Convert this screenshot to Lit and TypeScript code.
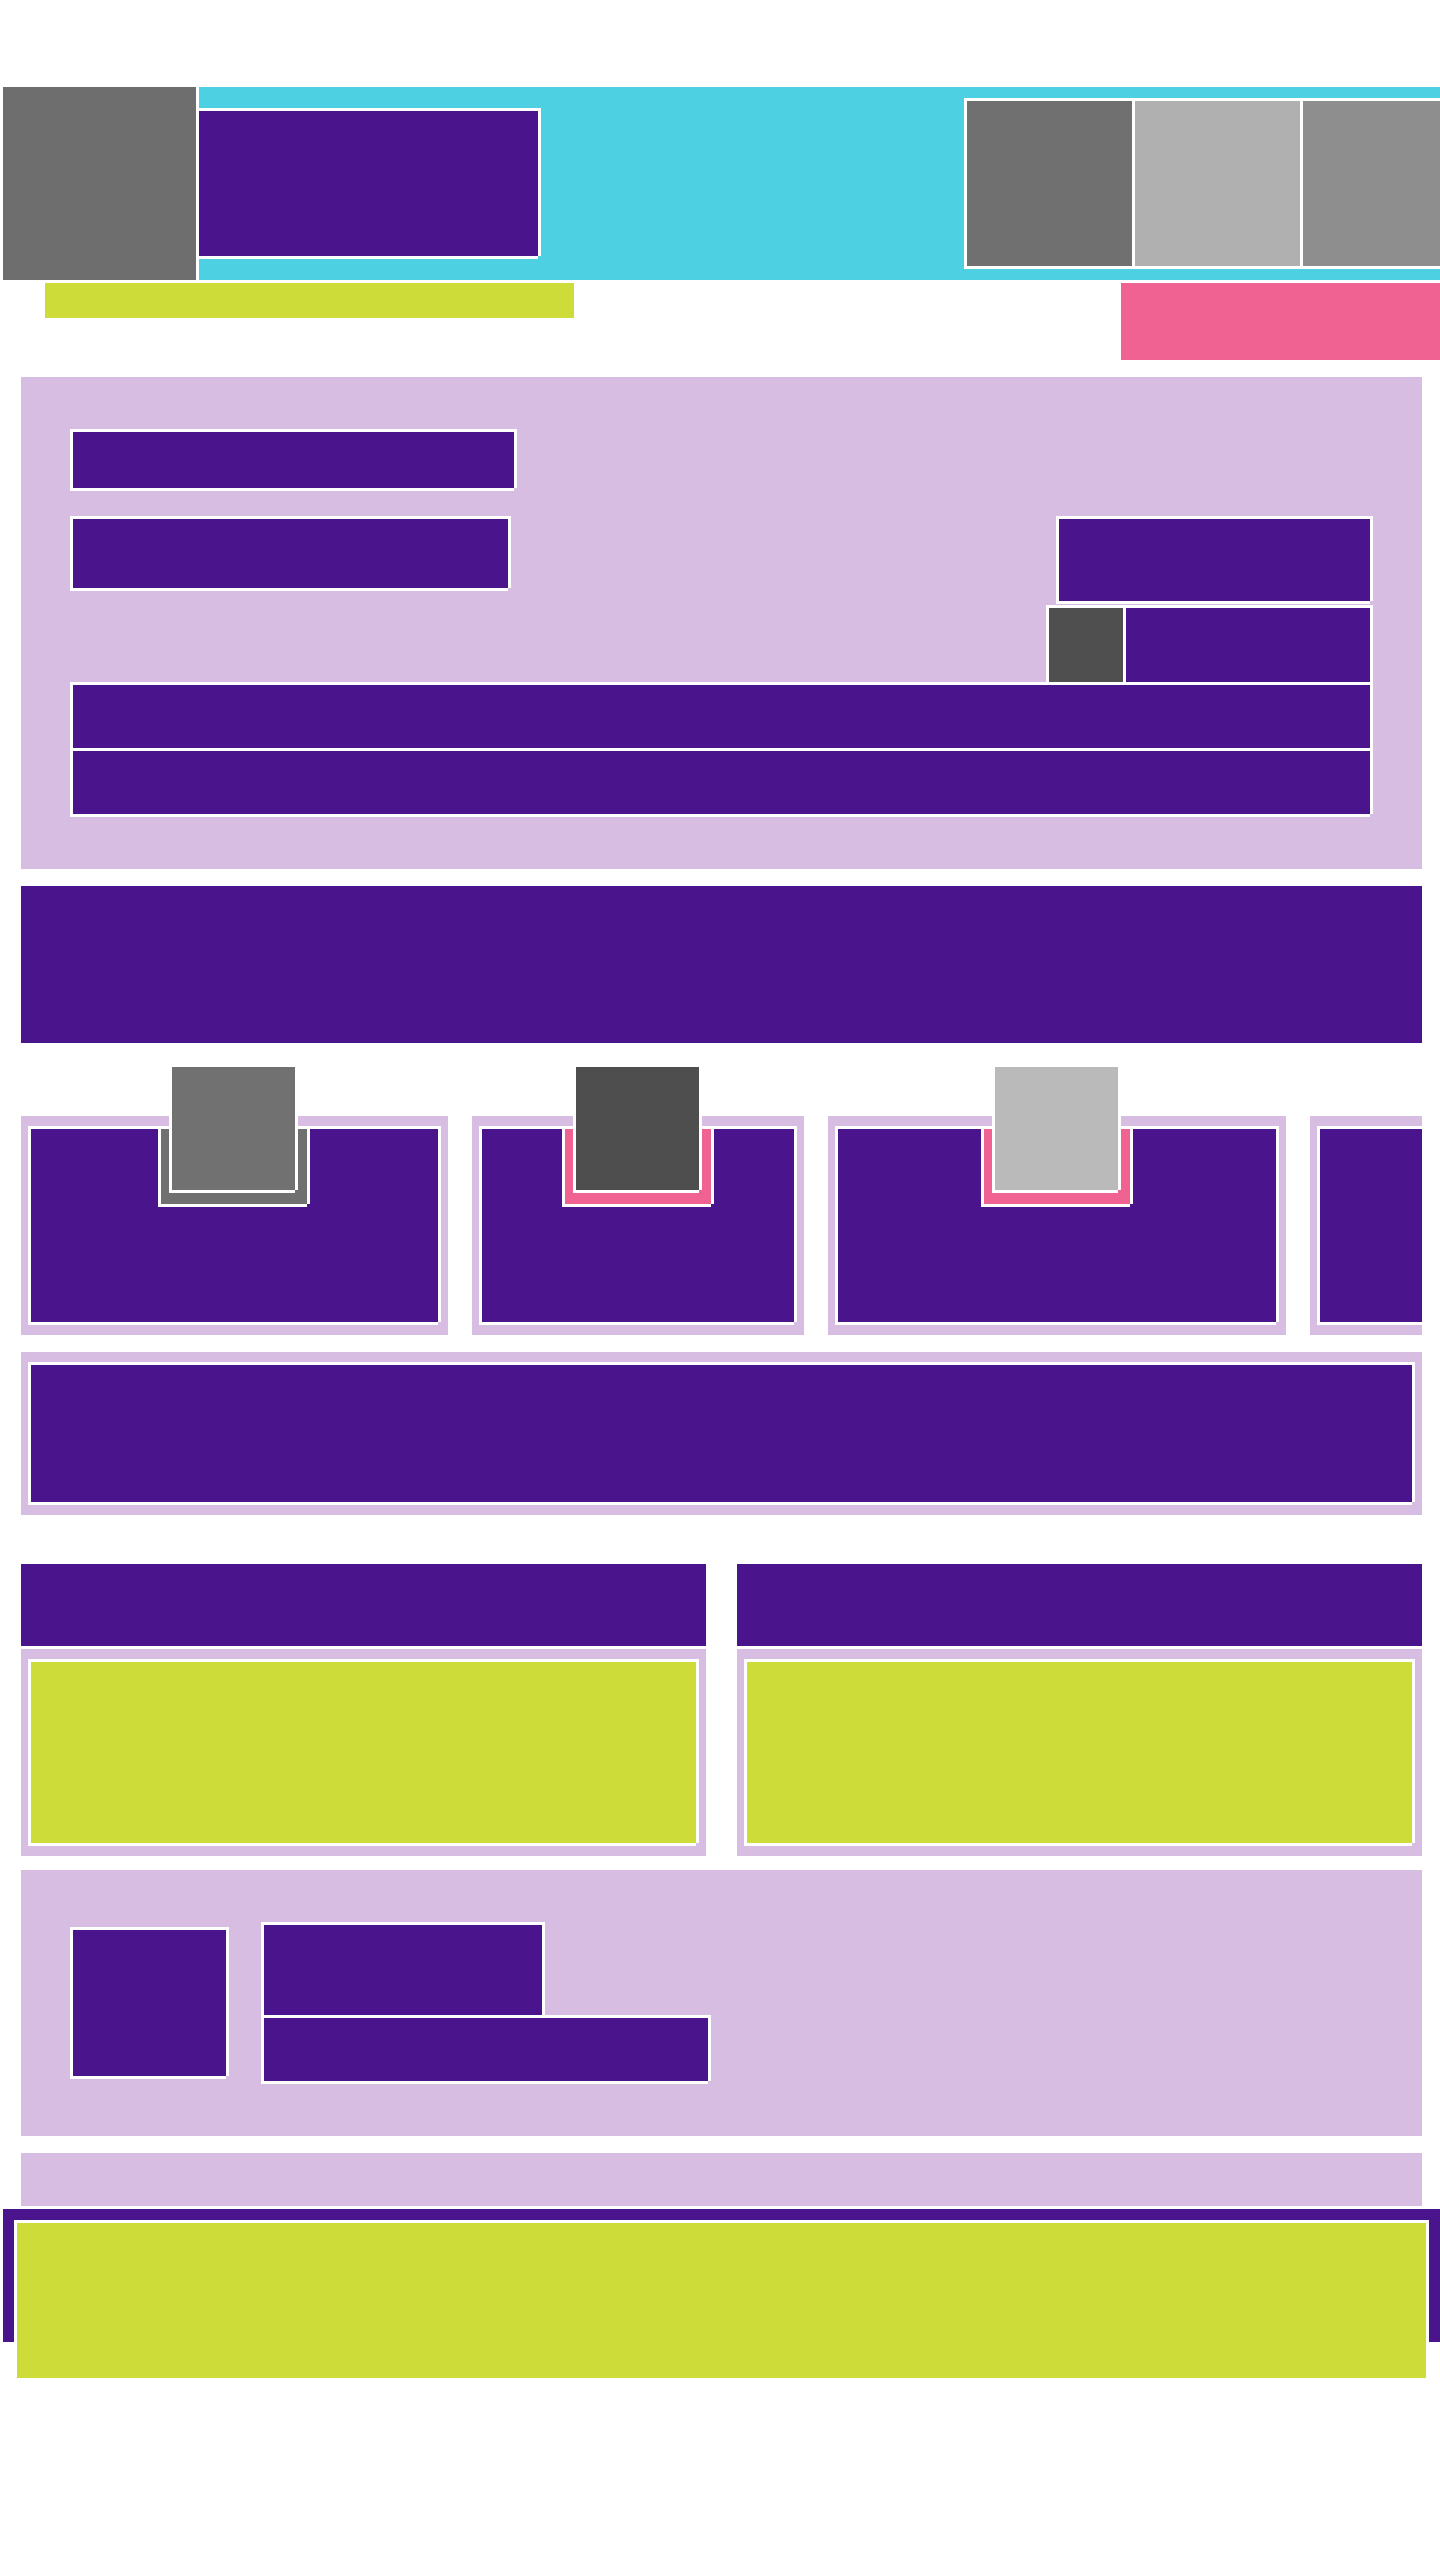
import { LitElement, html, css } from "lit";
import { customElement } from "lit/decorators.js";
import { styleMap } from "lit/directives/style-map.js";

interface Card {
  width: number;
  badge: string;
  avatar: string;
}

const CARDS: Card[] = [
  { width: 427, badge: "#707070", avatar: "#717171" },
  { width: 332, badge: "#f06292", avatar: "#4e4e4e" },
  { width: 458, badge: "#f06292", avatar: "#bababa" },
  { width: 427, badge: "#f06292", avatar: "#717171" },
];

const ACTIONS = ["#707070", "#b0b0b0", "#8e8e8e"];

@customElement("app-root")
export class AppRoot extends LitElement {
  static styles = css`
    :host {
      --purple: #4a148c;
      --lavender: #d7bde2;
      --lime: #cddc39;
      --pink: #f06292;
      --cyan: #4dd0e1;
      display: block;
      overflow-x: clip;
      background: #fff;
      padding: 87px 0 182px;
    }
    * {
      box-sizing: border-box;
    }
    /* White hairline around a block, open at its bottom right corner. */
    .block {
      background: var(--purple);
      box-shadow: -3px -3px #fff, 3px -3px #fff, -3px 3px #fff, 3px 0 #fff, 0 3px #fff;
    }
    .header {
      display: flex;
      gap: 3px;
      margin-left: 3px;
    }
    .logo {
      flex: none;
      width: 193px;
      background: #6e6e6e;
    }
    .bar {
      flex: 1;
      min-width: 0;
      display: flex;
      align-items: center;
      justify-content: space-between;
      height: 193px;
      background: var(--cyan);
    }
    .brand {
      width: 339px;
      height: 145px;
    }
    .actions {
      display: flex;
      gap: 3px;
      margin-right: -28px;
    }
    .action {
      width: 165px;
      height: 165px;
    }
    .subheader {
      display: flex;
      align-items: flex-start;
      justify-content: space-between;
      margin: 3px 0 17px 45px;
    }
    .crumbs {
      width: 529px;
      height: 35px;
      background: var(--lime);
    }
    .status {
      width: 319px;
      height: 77px;
      background: var(--pink);
    }
    .main {
      display: flex;
      flex-direction: column;
      margin: 0 18px 0 21px;
    }
    .panel {
      background: var(--lavender);
    }
    .summary {
      display: flex;
      flex-direction: column;
      gap: 3px;
      padding: 55px 52px;
    }
    .title {
      width: 441px;
      height: 56px;
      margin-bottom: 28px;
    }
    .details {
      display: flex;
      align-items: flex-start;
      justify-content: space-between;
    }
    .subtitle {
      width: 435px;
      height: 69px;
    }
    .side {
      display: flex;
      flex-direction: column;
      align-items: flex-end;
      gap: 7px;
    }
    .price {
      width: 311px;
      height: 82px;
    }
    .rating {
      display: flex;
      gap: 3px;
    }
    .rating-icon {
      width: 74px;
      height: 74px;
      background: #4f4f4f;
    }
    .rating-text {
      width: 244px;
      height: 74px;
    }
    .line {
      height: 63px;
    }
    .banner {
      height: 157px;
      margin-top: 17px;
      background: var(--purple);
    }
    .cards {
      display: flex;
      gap: 24px;
      margin-top: 73px;
      overflow-x: clip;
    }
    .card {
      flex: none;
      padding: 13px 10px;
    }
    .card-body {
      height: 193px;
    }
    .badge {
      position: relative;
      width: 146px;
      height: 75px;
      margin-left: round(down, 50% - 73px, 1px);
    }
    .avatar {
      position: absolute;
      top: -62px;
      left: 11px;
      width: 123px;
      height: 123px;
    }
    .framed {
      padding: 13px 10px;
    }
    .notice {
      margin-top: 17px;
    }
    .notice-body {
      height: 137px;
    }
    .columns {
      display: grid;
      grid-template-columns: 1fr 1fr;
      gap: 31px;
      margin-top: 49px;
    }
    .column {
      display: flex;
      flex-direction: column;
      gap: 3px;
    }
    .column-head {
      height: 82px;
      background: var(--purple);
    }
    .column-body {
      height: 181px;
      background: var(--lime);
    }
    .profile {
      display: flex;
      align-items: center;
      gap: 38px;
      margin-top: 14px;
      padding: 55px 52px;
    }
    .thumb {
      width: 153px;
      height: 146px;
    }
    .profile-text {
      display: flex;
      flex-direction: column;
      gap: 3px;
    }
    .name {
      width: 278px;
      height: 90px;
    }
    .note {
      width: 444px;
      height: 63px;
    }
    .strip {
      height: 53px;
      margin-top: 17px;
    }
    .footer {
      height: 133px;
      margin: 3px 0 0 3px;
      padding: 14px 14px 0;
      background: var(--purple);
    }
    .footer-body {
      height: 155px;
      background: var(--lime);
    }
  `;

  private renderCard(card: Card) {
    return html`
      <article class="card panel" style=${styleMap({ width: `${card.width}px` })}>
        <div class="card-body block">
          <div class="badge block" style=${styleMap({ background: card.badge })}>
            <div class="avatar block" style=${styleMap({ background: card.avatar })}></div>
          </div>
        </div>
      </article>
    `;
  }

  private renderColumn() {
    return html`
      <section class="column">
        <div class="column-head"></div>
        <div class="panel framed">
          <div class="block column-body"></div>
        </div>
      </section>
    `;
  }

  render() {
    return html`
      <header class="header">
        <div class="logo"></div>
        <div class="bar">
          <div class="brand block"></div>
          <div class="actions">
            ${ACTIONS.map(
              (color) => html`<div class="action block" style=${styleMap({ background: color })}></div>`
            )}
          </div>
        </div>
      </header>
      <div class="subheader">
        <div class="crumbs"></div>
        <div class="status"></div>
      </div>
      <main class="main">
        <section class="panel summary">
          <div class="block title"></div>
          <div class="details">
            <div class="block subtitle"></div>
            <div class="side">
              <div class="block price"></div>
              <div class="rating">
                <div class="block rating-icon"></div>
                <div class="block rating-text"></div>
              </div>
            </div>
          </div>
          <div class="block line"></div>
          <div class="block line"></div>
        </section>
        <section class="banner"></section>
        <section class="cards">${CARDS.map((card) => this.renderCard(card))}</section>
        <section class="panel framed notice">
          <div class="block notice-body"></div>
        </section>
        <div class="columns">${this.renderColumn()}${this.renderColumn()}</div>
        <section class="panel profile">
          <div class="block thumb"></div>
          <div class="profile-text">
            <div class="block name"></div>
            <div class="block note"></div>
          </div>
        </section>
        <section class="panel strip"></section>
      </main>
      <footer class="footer">
        <div class="block footer-body"></div>
      </footer>
    `;
  }
}
